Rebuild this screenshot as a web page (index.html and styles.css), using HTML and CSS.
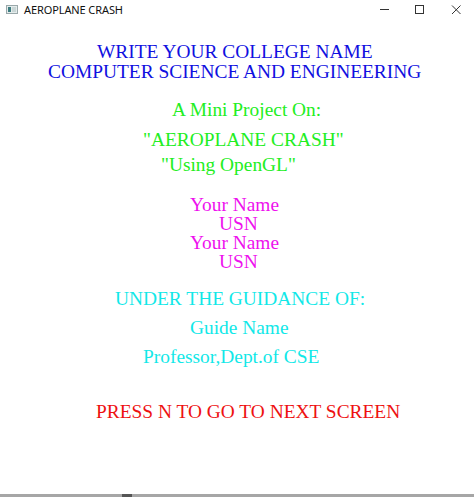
FILE: index.html
```html
<!DOCTYPE html>
<html lang="en">
<head>
    <meta charset="UTF-8">
    <title>AEROPLANE CRASH</title>
    <link rel="stylesheet" href="styles.css">
</head>
<body>
    <div class="window">
        <div class="titlebar">
            <div class="app">
                <svg class="app-icon" width="12" height="9" viewBox="0 0 12 9">
                    <rect x="0.5" y="0.5" width="11" height="8" fill="#e4ecec" stroke="#9aa8aa"/>
                    <rect x="2" y="2" width="3" height="5" fill="#3d7c80"/>
                    <rect x="6" y="2" width="4" height="5" fill="#c9d6d6"/>
                </svg>
                <span class="app-name">AEROPLANE CRASH</span>
            </div>
            <div class="controls">
                <svg class="ctl" width="46" height="22" viewBox="0 0 46 22">
                    <line x1="22" y1="9.5" x2="31" y2="9.5" stroke="#333" stroke-width="1"/>
                </svg>
                <svg class="ctl" width="40" height="22" viewBox="0 0 40 22">
                    <rect x="11.5" y="5.5" width="8" height="8" fill="none" stroke="#333" stroke-width="1"/>
                </svg>
                <svg class="ctl" width="30" height="22" viewBox="0 0 30 22">
                    <path d="M8 5.5 L16.5 14 M16.5 5.5 L8 14" stroke="#333" stroke-width="1"/>
                </svg>
            </div>
        </div>

        <div class="screen">
            <div class="college">
                <div class="line l-college">WRITE YOUR COLLEGE NAME</div>
                <div class="line l-dept">COMPUTER SCIENCE AND ENGINEERING</div>
            </div>

            <div class="project">
                <div class="line l-mini">A Mini Project On:</div>
                <div class="line l-title">"AEROPLANE CRASH"</div>
                <div class="line l-using">"Using OpenGL"</div>
            </div>

            <div class="students">
                <div class="line l-name">Your Name</div>
                <div class="line l-usn">USN</div>
                <div class="line l-name">Your Name</div>
                <div class="line l-usn">USN</div>
            </div>

            <div class="guide">
                <div class="line l-under">UNDER THE GUIDANCE OF:</div>
                <div class="line l-guide">Guide Name</div>
                <div class="line l-prof">Professor,Dept.of CSE</div>
            </div>

            <div class="line l-press">PRESS N TO GO TO NEXT SCREEN</div>
        </div>

        <div class="taskbar"><span class="task-item"></span></div>
    </div>
</body>
</html>
```

FILE: styles.css
```css
* {
    margin: 0;
    padding: 0;
    box-sizing: border-box;
}

body {
    background: #ffffff;
}

.window {
    height: 100vh;
    display: flex;
    flex-direction: column;
}

.titlebar {
    height: 30px;
    display: flex;
    justify-content: space-between;
    align-items: flex-start;
}

.app {
    display: flex;
    align-items: center;
    gap: 6px;
    padding: 3px 0 0 6px;
    height: 16px;
}

.app-name {
    font-family: "Noto Sans", "Open Sans", sans-serif;
    font-size: 11px;
    color: #111;
    letter-spacing: -0.1px;
}

.controls {
    display: flex;
}

.ctl {
    display: block;
}

.screen {
    font-family: "Liberation Serif", "Times New Roman", serif;
    font-size: 19.4px;
}

.line {
    line-height: 19px;
    height: 19px;
    white-space: nowrap;
}

.college {
    margin-top: 12px;
    color: #1010e0;
}

.college .line {
    line-height: 20px;
    height: 20px;
}

.l-college { padding-left: 97px; }
.l-dept { padding-left: 48px; }

.project {
    color: #22ee22;
}

.l-mini { margin-top: 18px; padding-left: 172px; }
.l-title { margin-top: 11px; padding-left: 143px; }
.l-using { margin-top: 6px; padding-left: 161px; }

.students {
    margin-top: 21px;
    color: #ee11ee;
}

.l-name { padding-left: 190px; }
.l-usn { padding-left: 219px; }

.guide {
    color: #11e8e8;
}

.l-under { margin-top: 18px; padding-left: 115px; }
.l-guide { margin-top: 10px; padding-left: 190px; }
.l-prof { margin-top: 10px; padding-left: 143px; }

.l-press {
    margin-top: 36px;
    padding-left: 96px;
    color: #ee1111;
}

.taskbar {
    margin-top: auto;
    height: 3px;
    background: #a6a6a6;
}

.task-item {
    display: block;
    width: 10px;
    height: 3px;
    margin-left: 122px;
    background: #555;
}
```
